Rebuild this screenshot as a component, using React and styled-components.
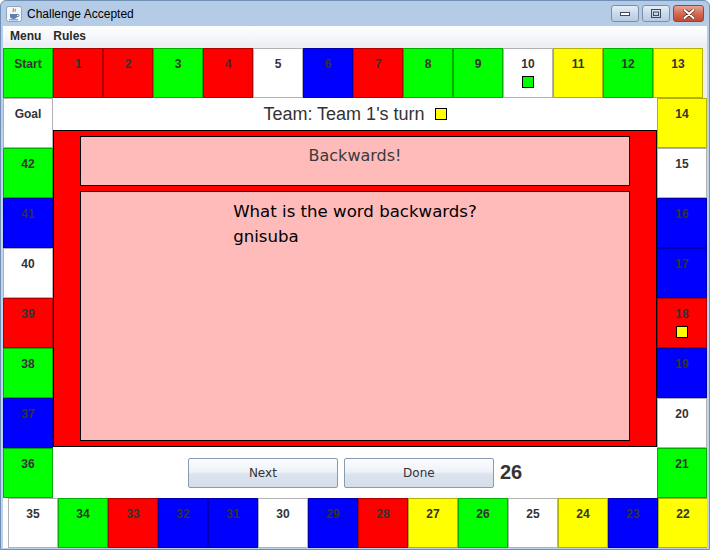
import React from "react";
import styled, { createGlobalStyle } from "styled-components";

const GlobalStyle = createGlobalStyle`
  html, body {
    margin: 0;
    padding: 0;
    overflow: hidden;
    background: #ffffff;
  }
`;

const PALETTE = {
  G: { bg: "#00ff00", edge: "#00b200" },
  R: { bg: "#ff0000", edge: "#b20000" },
  B: { bg: "#0000ff", edge: "#0000b2" },
  Y: { bg: "#ffff00", edge: "#b2b200" },
  W: { bg: "#ffffff", edge: "#b2b2b2" },
};

const topRow = [
  ["Start", "G"], ["1", "R"], ["2", "R"], ["3", "G"], ["4", "R"], ["5", "W"],
  ["6", "B"], ["7", "R"], ["8", "G"], ["9", "G"], ["10", "W", "#00ff00"],
  ["11", "Y"], ["12", "G"], ["13", "Y"],
];

const leftCol = [
  ["Goal", "W"], ["42", "G"], ["41", "B"], ["40", "W"],
  ["39", "R"], ["38", "G"], ["37", "B"], ["36", "G"],
];

const rightCol = [
  ["14", "Y"], ["15", "W"], ["16", "B"], ["17", "B"],
  ["18", "R", "#ffff00"], ["19", "B"], ["20", "W"], ["21", "G"],
];

const bottomRow = [
  ["35", "W"], ["34", "G"], ["33", "R"], ["32", "B"], ["31", "B"], ["30", "W"],
  ["29", "B"], ["28", "R"], ["27", "Y"], ["26", "G"], ["25", "W"], ["24", "Y"],
  ["23", "B"], ["22", "Y"],
];

const Frame = styled.div`
  width: 710px;
  height: 550px;
  box-sizing: border-box;
  display: flex;
  flex-direction: column;
  background: linear-gradient(180deg, #b4cbe6 0%, #c2d6ee 40%, #bcd2ec 100%);
  border: 1px solid #6f8fb5;
  border-radius: 6px 6px 0 0;
  overflow: hidden;
`;

const TitleBar = styled.div`
  height: 25px;
  display: flex;
  align-items: center;
  padding: 0 5px 0 5px;
  font: 12px "Liberation Sans", Arial, sans-serif;
  color: #000;
`;

const TitleText = styled.span`
  margin-left: 5px;
  flex: 1;
`;

const WinButtons = styled.div`
  display: flex;
  gap: 3px;
  align-self: flex-start;
  margin-top: 4px;
`;

const WinButton = styled.div`
  width: ${(p) => (p.$close ? "31px" : "28px")};
  height: 17px;
  box-sizing: border-box;
  border: 1px solid ${(p) => (p.$close ? "#8a4a40" : "#7b8ea8")};
  border-radius: 3px;
  background: ${(p) =>
    p.$close
      ? "linear-gradient(180deg, #e8a594 0%, #d46a54 50%, #c24a33 100%)"
      : "linear-gradient(180deg, #e5eef8 0%, #cbd9ea 50%, #b9cbe2 100%)"};
  display: flex;
  align-items: center;
  justify-content: center;
`;

const Client = styled.div`
  flex: 1;
  margin: 0 2px 1px 2px;
  background: #ffffff;
  display: flex;
  flex-direction: column;
  overflow: hidden;
`;

const MenuBar = styled.div`
  height: 20px;
  display: flex;
  align-items: center;
  padding-left: 1px;
  background: linear-gradient(180deg, #ffffff 0%, #f4f6fa 60%, #e9edf3 100%);
  border-bottom: 2px solid #eef0f3;
`;

const MenuItem = styled.span`
  padding: 0 6px;
  font: bold 12px "Liberation Sans", Arial, sans-serif;
  color: #2a2a2a;
`;

const Row = styled.div`
  display: flex;
  height: 50px;
  padding-left: ${(p) => p.$indent || 0}px;
  background: ${(p) => p.$fill || "#ffffff"};
`;

const Middle = styled.div`
  display: flex;
  height: 400px;
`;

const Column = styled.div`
  display: flex;
  flex-direction: column;
  width: 50px;
`;

const Cell = styled.div`
  width: 50px;
  height: 50px;
  flex: none;
  box-sizing: border-box;
  border: 1px solid ${(p) => p.$edge};
  background: ${(p) => p.$bg};
  display: flex;
  flex-direction: column;
  align-items: center;
  padding-top: 8px;
  font: bold 12px/14px "Liberation Sans", Arial, sans-serif;
  color: #333;
`;

const Token = styled.div`
  width: 12px;
  height: 12px;
  box-sizing: border-box;
  margin-top: ${(p) => (p.$inline ? 0 : 5)}px;
  border: 1px solid #000;
  background: ${(p) => p.$color};
`;

const Center = styled.div`
  width: 604px;
  display: flex;
  flex-direction: column;
  background: #ffffff;
`;

const TeamRow = styled.div`
  height: 32px;
  display: flex;
  align-items: center;
  justify-content: center;
  gap: 10px;
  font: 18px "Liberation Sans", Arial, sans-serif;
  color: #333;
`;

const RedPanel = styled.div`
  height: 317px;
  box-sizing: border-box;
  border: 1px solid #000;
  background: #ff0000;
  padding: 5px 26px;
  display: flex;
  flex-direction: column;
  gap: 5px;
`;

const PinkBox = styled.div`
  box-sizing: border-box;
  border: 1px solid #000;
  background: #ffbaba;
  font-family: "Comic Sans MS", "DejaVu Sans", sans-serif;
`;

const Heading = styled(PinkBox)`
  height: 50px;
  padding-top: 8px;
  text-align: center;
  font-size: 16px;
  line-height: 22px;
  color: #3a3a3a;
`;

const Question = styled(PinkBox)`
  flex: 1;
  display: flex;
  justify-content: center;
  padding-top: 7px;
`;

const QuestionText = styled.div`
  font-size: 16.6px;
  line-height: 25px;
  color: #000;
`;

const ButtonRow = styled.div`
  flex: 1;
  display: flex;
  align-items: center;
  justify-content: center;
  gap: 6px;
`;

const Button = styled.button`
  width: 150px;
  height: 30px;
  box-sizing: border-box;
  border: 1px solid #8a9ab0;
  border-radius: 2px;
  background: linear-gradient(180deg, #fbfcfe 0%, #eef2f8 45%, #dbe3ee 55%, #d4dde9 100%);
  font: 12px "Comic Sans MS", "DejaVu Sans", sans-serif;
  color: #333;
  padding: 0;
`;

const Counter = styled.span`
  font: bold 20px "Liberation Sans", Arial, sans-serif;
  color: #333;
`;

const JavaIcon = () => (
  <svg width="16" height="16" viewBox="0 0 16 16">
    <rect x="0.5" y="0.5" width="15" height="15" rx="2" fill="#f4f7fb" stroke="#8fa3bd" />
    <path d="M7 2.5c1.5 1 -1 2 0.5 3.5M9 3c1 0.8 -0.6 1.6 0.4 2.6" stroke="#e2632a" strokeWidth="1.1" fill="none" />
    <path d="M4 8h7v2.5c0 1.5 -1.5 2.5 -3.5 2.5S4 12 4 10.5z" fill="#5b7fb8" />
    <path d="M11 8.5h1.2c1 0 1 2 -0.2 2H11" stroke="#5b7fb8" fill="none" />
    <rect x="3" y="13.3" width="9" height="1" fill="#5b7fb8" />
  </svg>
);

const MinGlyph = () => (
  <svg width="10" height="4" viewBox="0 0 10 4">
    <rect x="0.5" y="0.5" width="9" height="3" fill="#ffffff" stroke="#3b4a5e" />
  </svg>
);

const MaxGlyph = () => (
  <svg width="10" height="9" viewBox="0 0 10 9">
    <rect x="0.5" y="0.5" width="9" height="8" fill="none" stroke="#3b4a5e" />
    <rect x="2.5" y="3" width="5" height="3.5" fill="none" stroke="#3b4a5e" />
  </svg>
);

const CloseGlyph = () => (
  <svg width="12" height="10" viewBox="0 0 12 10">
    <path d="M1.5 1l9 8M10.5 1l-9 8" stroke="#5a2a22" strokeWidth="3.4" strokeLinecap="round" />
    <path d="M1.5 1l9 8M10.5 1l-9 8" stroke="#ffffff" strokeWidth="2" strokeLinecap="round" />
  </svg>
);

const Square = ({ label, color, token }) => {
  const c = PALETTE[color];
  return (
    <Cell $bg={c.bg} $edge={c.edge}>
      {label}
      {token && <Token $color={token} />}
    </Cell>
  );
};

export default function App() {
  return (
    <>
      <GlobalStyle />
      <Frame>
        <TitleBar>
          <JavaIcon />
          <TitleText>Challenge Accepted</TitleText>
          <WinButtons>
            <WinButton><MinGlyph /></WinButton>
            <WinButton><MaxGlyph /></WinButton>
            <WinButton $close><CloseGlyph /></WinButton>
          </WinButtons>
        </TitleBar>
        <Client>
          <MenuBar>
            <MenuItem>Menu</MenuItem>
            <MenuItem>Rules</MenuItem>
          </MenuBar>
          <Row $fill="#eeeeee">
            {topRow.map(([l, c, t]) => <Square key={l} label={l} color={c} token={t} />)}
          </Row>
          <Middle>
            <Column>
              {leftCol.map(([l, c, t]) => <Square key={l} label={l} color={c} token={t} />)}
            </Column>
            <Center>
              <TeamRow>
                Team: Team 1's turn
                <Token $color="#ffff00" $inline />
              </TeamRow>
              <RedPanel>
                <Heading>Backwards!</Heading>
                <Question>
                  <QuestionText>
                    What is the word backwards?
                    <br />
                    gnisuba
                  </QuestionText>
                </Question>
              </RedPanel>
              <ButtonRow>
                <Button>Next</Button>
                <Button>Done</Button>
                <Counter>26</Counter>
              </ButtonRow>
            </Center>
            <Column>
              {rightCol.map(([l, c, t]) => <Square key={l} label={l} color={c} token={t} />)}
            </Column>
          </Middle>
          <Row $indent={5}>
            {bottomRow.map(([l, c, t]) => <Square key={l} label={l} color={c} token={t} />)}
          </Row>
        </Client>
      </Frame>
    </>
  );
}
